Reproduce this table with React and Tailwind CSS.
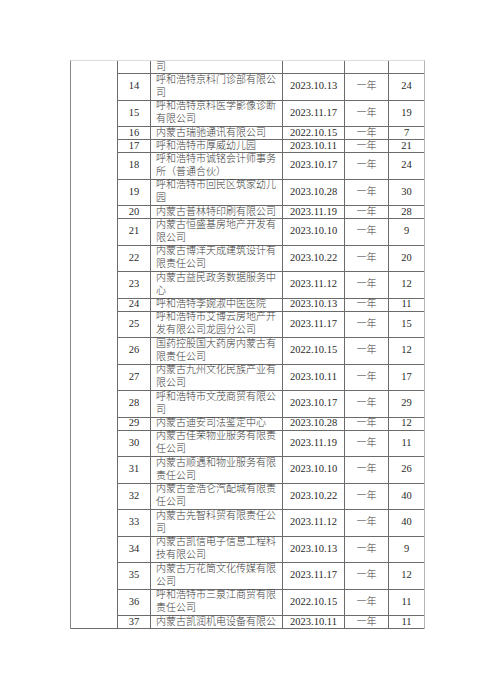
import React from "react";

const rows = [
  { no: "", name: ["司"], date: "", dur: "", count: "" },
  { no: "14", name: ["呼和浩特京科门诊部有限公", "司"], date: "2023.10.13", count: "24" },
  { no: "15", name: ["呼和浩特京科医学影像诊断", "有限公司"], date: "2023.11.17", count: "19" },
  { no: "16", name: ["内蒙古瑞驰通讯有限公司"], date: "2022.10.15", count: "7" },
  { no: "17", name: ["呼和浩特市厚威幼儿园"], date: "2023.10.11", count: "21" },
  { no: "18", name: ["呼和浩特市诚铭会计师事务", "所（普通合伙）"], date: "2023.10.17", count: "24" },
  { no: "19", name: ["呼和浩特市回民区筑家幼儿", "园"], date: "2023.10.28", count: "30" },
  { no: "20", name: ["内蒙古普林特印刷有限公司"], date: "2023.11.19", count: "28" },
  { no: "21", name: ["内蒙古恒盛基房地产开发有", "限公司"], date: "2023.10.10", count: "9" },
  { no: "22", name: ["内蒙古博洋天成建筑设计有", "限责任公司"], date: "2023.10.22", count: "20" },
  { no: "23", name: ["内蒙古益民政务数据服务中", "心"], date: "2023.11.12", count: "12" },
  { no: "24", name: ["呼和浩特李婉淑中医医院"], date: "2023.10.13", count: "11" },
  { no: "25", name: ["呼和浩特市艾博云房地产开", "发有限公司龙园分公司"], date: "2023.11.17", count: "15" },
  { no: "26", name: ["国药控股国大药房内蒙古有", "限责任公司"], date: "2022.10.15", count: "12" },
  { no: "27", name: ["内蒙古九州文化民族产业有", "限公司"], date: "2023.10.11", count: "17" },
  { no: "28", name: ["呼和浩特市文茂商贸有限公", "司"], date: "2023.10.17", count: "29" },
  { no: "29", name: ["内蒙古迪安司法鉴定中心"], date: "2023.10.28", count: "12" },
  { no: "30", name: ["内蒙古佳荣物业服务有限责", "任公司"], date: "2023.11.19", count: "11" },
  { no: "31", name: ["内蒙古顺遇和物业服务有限", "责任公司"], date: "2023.10.10", count: "26" },
  { no: "32", name: ["内蒙古金浩仑汽配城有限责", "任公司"], date: "2023.10.22", count: "40" },
  { no: "33", name: ["内蒙古先智科贸有限责任公", "司"], date: "2023.11.12", count: "40" },
  { no: "34", name: ["内蒙古凯信电子信息工程科", "技有限公司"], date: "2023.10.13", count: "9" },
  { no: "35", name: ["内蒙古万花筒文化传媒有限", "公司"], date: "2023.11.17", count: "12" },
  { no: "36", name: ["呼和浩特市三泉江商贸有限", "责任公司"], date: "2022.10.15", count: "11" },
  { no: "37", name: ["内蒙古凯润机电设备有限公"], date: "2023.10.11", count: "11" },
];

const Row = ({ row }) => {
  const double = row.name.length > 1;
  return (
    <div className={`flex border-b border-[#6b6b6b] ${double ? "h-[26.5px]" : "h-[13px]"}`}>
      <div className="w-[33px] flex items-center justify-center border-r border-[#6b6b6b]">
        {row.no}
      </div>
      <div className="w-[132px] flex flex-col justify-center pl-[5px] border-r border-[#6b6b6b] text-[10px] font-light text-[#3a3a3a]">
        {row.name.map((line, i) => (
          <div key={i} className="whitespace-nowrap">
            {line}
          </div>
        ))}
      </div>
      <div className="w-[62px] flex items-center justify-center border-r border-[#6b6b6b]">
        {row.date}
      </div>
      <div className="w-[44px] flex items-center justify-center border-r border-[#6b6b6b] text-[10px] font-light text-[#3a3a3a]">
        {row.no ? "一年" : ""}
      </div>
      <div className="w-[35px] flex items-center justify-center">
        {row.count}
      </div>
    </div>
  );
};

export default function App() {
  return (
    <div className="w-[495px] h-[700px] bg-white pt-[60px] pl-[70px]">
      <div
        className="flex w-[355px] border-t border-t-[#dcdcdc] border-l border-l-[#8a8a8a] border-r border-r-[#b5b5b5] text-[10.5px] leading-[12.8px] text-[#2a2a2a]"
        style={{ fontFamily: '"Liberation Serif", "Noto Sans CJK SC", serif' }}
      >
        <div className="w-[47px] border-r border-[#6b6b6b] border-b border-b-[#6b6b6b]" />
        <div className="flex flex-col">
          {rows.map((row, i) => (
            <Row key={i} row={row} />
          ))}
        </div>
      </div>
    </div>
  );
}
